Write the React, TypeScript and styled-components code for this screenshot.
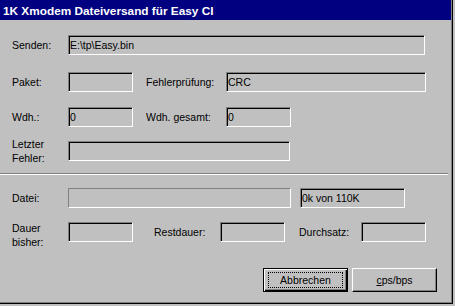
import * as React from 'react';
import styled, { createGlobalStyle } from 'styled-components';

const GlobalStyle = createGlobalStyle`
  html, body {
    margin: 0;
    padding: 0;
    background: #c0c0c0;
  }
  body {
    font-family: "Liberation Sans", Arial, sans-serif;
  }
`;

const Window = styled.div`
  box-sizing: border-box;
  width: 453px;
  height: 304px;
  display: flex;
  flex-direction: column;
  background: #c0c0c0;
  border-right: 1px solid #000;
  border-bottom: 1px solid #000;
  box-shadow: inset -1px -1px 0 #808080;
`;

const TitleBar = styled.div`
  height: 20px;
  box-sizing: border-box;
  padding: 2px 0 0 3px;
  margin-right: 1px;
  background: #000080;
  color: #fff;
  font-weight: bold;
  font-size: 11.8px;
  line-height: 18px;
  white-space: nowrap;
`;

const Section = styled.div<{ $top: number }>`
  display: flex;
  flex-direction: column;
  padding-left: 12px;
  padding-top: ${p => p.$top}px;
`;

const Row = styled.div<{ $top?: number; $align?: string }>`
  display: flex;
  align-items: ${p => p.$align || 'center'};
  margin-top: ${p => p.$top || 0}px;
`;

const Label = styled.div<{ $w: number; $ml?: number; $mt?: number }>`
  width: ${p => p.$w}px;
  margin-left: ${p => p.$ml || 0}px;
  margin-top: ${p => p.$mt || 0}px;
  flex-shrink: 0;
  font-size: 10.5px;
  line-height: 14px;
  color: #000;
  white-space: nowrap;
`;

const Field = styled.div<{ $w: number; $ml?: number; $flat?: boolean; $mt?: number }>`
  box-sizing: border-box;
  width: ${p => p.$w}px;
  height: 20px;
  margin-left: ${p => p.$ml || 0}px;
  margin-top: ${p => p.$mt || 0}px;
  flex-shrink: 0;
  padding-left: 1px;
  border: 1px solid;
  border-color: #808080 #fff #fff #808080;
  box-shadow: ${p => (p.$flat ? 'none' : 'inset 1px 1px 0 #000, inset -1px -1px 0 #c0c0c0')};
  background: #c0c0c0;
  font-size: 10.5px;
  line-height: 18px;
  color: #000;
  white-space: nowrap;
  overflow: hidden;
`;

const Separator = styled.div`
  width: 448px;
  margin-top: 8px;
  border-top: 1px solid #808080;
  border-bottom: 1px solid #fff;
`;

const ButtonRow = styled.div`
  display: flex;
  justify-content: flex-end;
  gap: 4px;
  margin-top: 19px;
  padding-right: 15px;
`;

const Button = styled.button<{ $default?: boolean }>`
  box-sizing: border-box;
  width: 85px;
  height: 24px;
  padding: 0;
  display: flex;
  align-items: center;
  justify-content: center;
  background: #c0c0c0;
  font-family: "Liberation Sans", Arial, sans-serif;
  font-size: 10.5px;
  color: #000;
  border: 1px solid;
  border-color: ${p => (p.$default ? '#000' : '#fff #000 #000 #fff')};
  box-shadow: ${p =>
    p.$default
      ? 'inset 1px 1px 0 #fff, inset -1px -1px 0 #000, inset -2px -2px 0 #808080'
      : 'inset -1px -1px 0 #808080'};
`;

const Focus = styled.span`
  box-sizing: border-box;
  width: 75px;
  height: 16px;
  display: flex;
  align-items: center;
  justify-content: center;
  border: 1px dotted #000;
`;

const Hotkey = styled.span`
  text-decoration: underline;
`;

export default function App() {
  return (
    <>
      <GlobalStyle />
      <Window>
        <TitleBar>1K Xmodem Dateiversand für Easy CI</TitleBar>
        <Section $top={15}>
          <Row>
            <Label $w={56}>Senden:</Label>
            <Field $w={357}>E:\tp\Easy.bin</Field>
          </Row>
          <Row $top={17}>
            <Label $w={56}>Paket:</Label>
            <Field $w={65} />
            <Label $w={80} $ml={13}>Fehlerprüfung:</Label>
            <Field $w={200}>CRC</Field>
          </Row>
          <Row $top={15}>
            <Label $w={56}>Wdh.:</Label>
            <Field $w={65}>0</Field>
            <Label $w={80} $ml={13}>Wdh. gesamt:</Label>
            <Field $w={65}>0</Field>
          </Row>
          <Row $top={10}>
            <Label $w={56}>Letzter<br />Fehler:</Label>
            <Field $w={222} />
          </Row>
        </Section>
        <Separator />
        <Section $top={13}>
          <Row>
            <Label $w={56}>Datei:</Label>
            <Field $w={223} $flat />
            <Field $w={105} $ml={9}>0k von 110K</Field>
          </Row>
          <Row $top={13} $align="flex-start">
            <Label $w={56}>Dauer<br />bisher:</Label>
            <Field $w={65} $mt={1} />
            <Label $w={66} $ml={21} $mt={4}>Restdauer:</Label>
            <Field $w={65} $mt={1} />
            <Label $w={62} $ml={14} $mt={4}>Durchsatz:</Label>
            <Field $w={65} $mt={1} />
          </Row>
        </Section>
        <ButtonRow>
          <Button $default>
            <Focus>Abbrechen</Focus>
          </Button>
          <Button>
            <span><Hotkey>c</Hotkey>ps/bps</span>
          </Button>
        </ButtonRow>
      </Window>
    </>
  );
}
